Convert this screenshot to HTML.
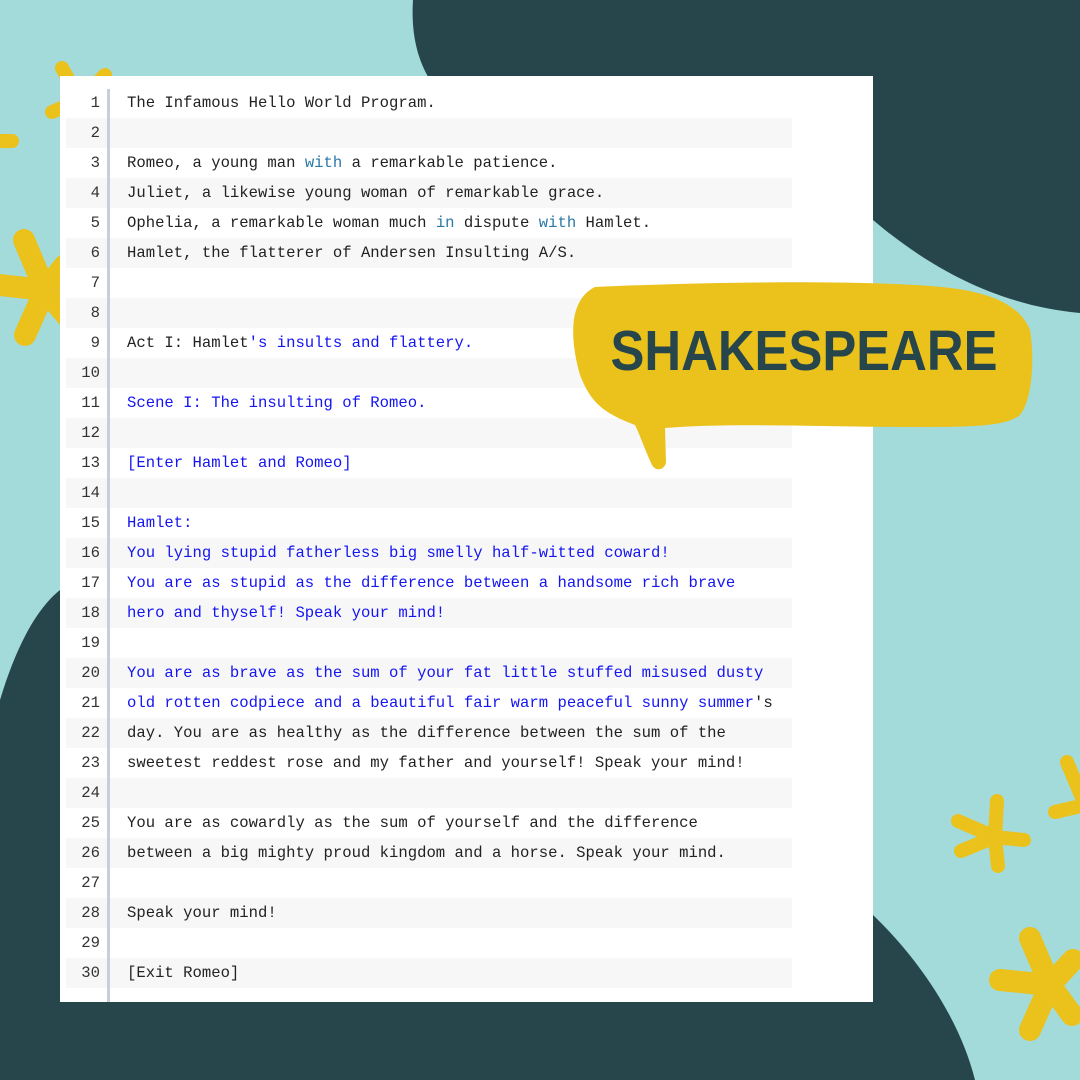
<!DOCTYPE html>
<html><head><meta charset="utf-8"><style>
html,body{margin:0;padding:0}
body{width:1080px;height:1080px;position:relative;overflow:hidden;background:#a3dbdb;font-family:"Liberation Mono",monospace}
svg.bg{position:absolute;left:0;top:0}
.card{position:absolute;left:60px;top:76px;width:813px;height:926px;background:#fff}
.gut{position:absolute;left:47px;top:13px;width:3px;height:913px;background:#c4d0dc;z-index:2}
.row{position:absolute;left:6px;width:726px;height:30px;line-height:30px;font-size:15.6px;color:#222;white-space:pre}
.row.s{background:#f7f7f7}
.n{position:absolute;left:0;width:34px;text-align:right;color:#333}
.t{position:absolute;left:61px}
.b{color:#1515f0}
.k{color:#2a78a8}
</style></head><body>
<svg class="bg" width="1080" height="1080" viewBox="0 0 1080 1080">
<path d="M413,0 C400,200 700,150 873,220 C920,260 990,305 1080,313 L1080,0 Z" fill="#26464b"/>
<path d="M0,700 C15,650 35,610 60,590 L873,590 L873,915 C920,960 960,1020 975,1080 L0,1080 Z" fill="#26464b"/>
<g stroke="#ebc11c" stroke-linecap="round" fill="none">
<g stroke-width="14"><path d="M80,100 L62,68 M80,100 L52,112 M80,100 L105,75"/>
<path d="M-10,141 L12,141"/>
<path d="M995,837 L997,801 M995,837 L1024,840 M995,837 L998,866 M995,837 L958,821 M995,837 L961,851"/>
<path d="M1085,805 L1067,762 M1085,805 L1055,812"/></g>
<g stroke-width="22"><path d="M45,290 L24,240 M45,290 L0,285 M45,290 L25,335 M45,290 L65,265 M45,290 L70,320"/>
<path d="M1050,985 L1030,938 M1050,985 L1000,980 M1050,985 L1030,1030 M1050,985 L1073,960 M1050,985 L1072,1015"/></g>
</g>
</svg>
<div class="card"><div class="gut"></div>
<div class="row" style="top:12px"><span class="n">1</span><span class="t">The Infamous Hello World Program.</span></div>
<div class="row s" style="top:42px"><span class="n">2</span></div>
<div class="row" style="top:72px"><span class="n">3</span><span class="t">Romeo, a young man <span class="k">with</span> a remarkable patience.</span></div>
<div class="row s" style="top:102px"><span class="n">4</span><span class="t">Juliet, a likewise young woman of remarkable grace.</span></div>
<div class="row" style="top:132px"><span class="n">5</span><span class="t">Ophelia, a remarkable woman much <span class="k">in</span> dispute <span class="k">with</span> Hamlet.</span></div>
<div class="row s" style="top:162px"><span class="n">6</span><span class="t">Hamlet, the flatterer of Andersen Insulting A/S.</span></div>
<div class="row" style="top:192px"><span class="n">7</span></div>
<div class="row s" style="top:222px"><span class="n">8</span></div>
<div class="row" style="top:252px"><span class="n">9</span><span class="t">Act I: Hamlet<span class="b">'s insults and flattery.</span></span></div>
<div class="row s" style="top:282px"><span class="n">10</span></div>
<div class="row" style="top:312px"><span class="n">11</span><span class="t b">Scene I: The insulting of Romeo.</span></div>
<div class="row s" style="top:342px"><span class="n">12</span></div>
<div class="row" style="top:372px"><span class="n">13</span><span class="t b">[Enter Hamlet and Romeo]</span></div>
<div class="row s" style="top:402px"><span class="n">14</span></div>
<div class="row" style="top:432px"><span class="n">15</span><span class="t b">Hamlet:</span></div>
<div class="row s" style="top:462px"><span class="n">16</span><span class="t b">You lying stupid fatherless big smelly half-witted coward!</span></div>
<div class="row" style="top:492px"><span class="n">17</span><span class="t b">You are as stupid as the difference between a handsome rich brave</span></div>
<div class="row s" style="top:522px"><span class="n">18</span><span class="t b">hero and thyself! Speak your mind!</span></div>
<div class="row" style="top:552px"><span class="n">19</span></div>
<div class="row s" style="top:582px"><span class="n">20</span><span class="t b">You are as brave as the sum of your fat little stuffed misused dusty</span></div>
<div class="row" style="top:612px"><span class="n">21</span><span class="t"><span class="b">old rotten codpiece and a beautiful fair warm peaceful sunny summer</span>'s</span></div>
<div class="row s" style="top:642px"><span class="n">22</span><span class="t">day. You are as healthy as the difference between the sum of the</span></div>
<div class="row" style="top:672px"><span class="n">23</span><span class="t">sweetest reddest rose and my father and yourself! Speak your mind!</span></div>
<div class="row s" style="top:702px"><span class="n">24</span></div>
<div class="row" style="top:732px"><span class="n">25</span><span class="t">You are as cowardly as the sum of yourself and the difference</span></div>
<div class="row s" style="top:762px"><span class="n">26</span><span class="t">between a big mighty proud kingdom and a horse. Speak your mind.</span></div>
<div class="row" style="top:792px"><span class="n">27</span></div>
<div class="row s" style="top:822px"><span class="n">28</span><span class="t">Speak your mind!</span></div>
<div class="row" style="top:852px"><span class="n">29</span></div>
<div class="row s" style="top:882px"><span class="n">30</span><span class="t">[Exit Romeo]</span></div>
</div>
<svg class="bg" width="1080" height="1080" viewBox="0 0 1080 1080">
<path d="M595,287 C700,282 850,280 930,286 C990,290 1020,305 1030,330 C1035,360 1032,400 1020,415 C1005,428 960,427 900,427 C800,426 720,423 665,428 L666,462 C665,470 656,472 652,465 C645,450 640,435 635,425 C600,412 590,400 580,375 C570,340 568,300 595,287 Z" fill="#ebc11c"/>
<text x="804" y="370" text-anchor="middle" font-family="Liberation Sans, sans-serif" font-weight="bold" font-size="57" fill="#26464b" textLength="387" lengthAdjust="spacingAndGlyphs">SHAKESPEARE</text>
</svg>
</body></html>
